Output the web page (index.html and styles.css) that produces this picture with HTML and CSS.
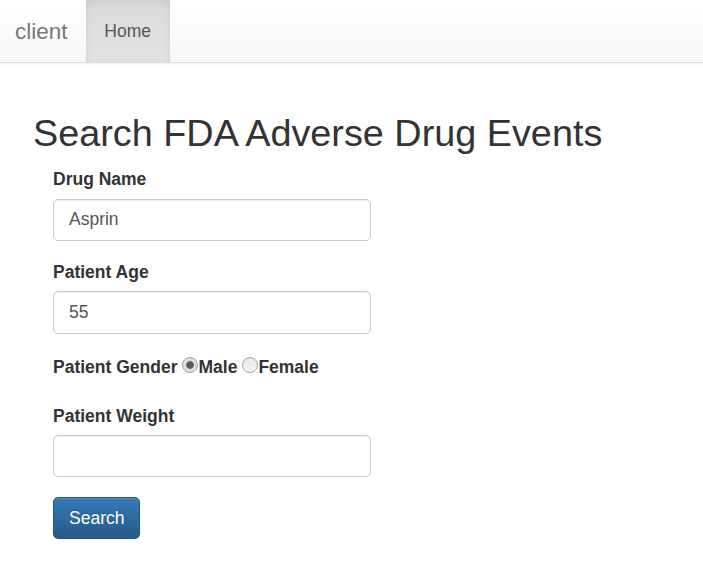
FILE: index.html
```html
<!DOCTYPE html>
<html lang="en">
<head>
<meta charset="utf-8">
<title>client</title>
<link rel="stylesheet" href="styles.css">
</head>
<body>
<nav class="navbar">
  <a class="brand" href="#">client</a>
  <ul class="nav">
    <li class="nav-item active"><a href="#">Home</a></li>
  </ul>
</nav>
<main class="container">
  <h2 class="title">Search FDA Adverse Drug Events</h2>
  <form class="search-form">
    <div class="form-group">
      <label class="field-label" for="drug">Drug Name</label>
      <input class="form-control" id="drug" type="text" value="Asprin">
    </div>
    <div class="form-group">
      <label class="field-label" for="age">Patient Age</label>
      <input class="form-control" id="age" type="text" value="55">
    </div>
    <div class="form-group gender-group">
      <span class="inline-label">Patient Gender</span><input class="radio" type="radio" name="gender" id="male" checked><label class="inline-label" for="male">Male</label><input class="radio" type="radio" name="gender" id="female"><label class="inline-label" for="female">Female</label>
    </div>
    <div class="form-group">
      <label class="field-label" for="weight">Patient Weight</label>
      <input class="form-control" id="weight" type="text" value="">
    </div>
    <button class="btn-primary" type="button">Search</button>
  </form>
</main>
</body>
</html>
```

FILE: styles.css
```css
html, body {
  margin: 0;
  padding: 0;
  background: #fff;
}
body {
  font-family: "Liberation Sans", Arial, Helvetica, sans-serif;
  font-size: 17.5px;
  line-height: 25px;
  color: #333;
}
.navbar {
  display: flex;
  height: 62px;
  background: linear-gradient(to bottom, #ffffff 0%, #f8f8f8 100%);
  border-bottom: 1px solid #dedede;
  box-shadow: 0 1px 6px rgba(0, 0, 0, 0.07);
}
.brand {
  display: block;
  padding: 18.5px 18px 18.5px 15px;
  font-size: 22.5px;
  line-height: 25px;
  color: #777;
  text-decoration: none;
}
.nav {
  list-style: none;
  margin: 0;
  padding: 0;
  display: flex;
}
.nav-item a {
  display: block;
  padding: 18.5px 18.75px;
  line-height: 25px;
  color: #555;
  text-decoration: none;
}
.nav-item.active a {
  background: linear-gradient(to bottom, #dbdbdb 0%, #e2e2e2 100%);
  box-shadow: inset 0 3px 9px rgba(0, 0, 0, 0.075);
}
.container {
  padding: 49.5px 0 0 33px;
}
.title {
  margin: 0 0 12.5px;
  font-size: 37.8px;
  line-height: 41.25px;
  font-weight: 500;
  color: #333;
}
.search-form {
  margin: 0 0 0 20px;
  padding-top: 1px;
}
.form-group {
  margin-bottom: 18.75px;
}
.field-label {
  display: block;
  font-weight: bold;
  margin-bottom: 6.25px;
}
.form-control {
  display: block;
  box-sizing: border-box;
  width: 317.5px;
  height: 42.5px;
  padding: 7.5px 15px;
  margin: 0;
  font-family: inherit;
  font-size: 17.5px;
  line-height: 25px;
  color: #555;
  background: #fff;
  border: 1px solid #ccc;
  border-radius: 5px;
  box-shadow: inset 0 1px 1px rgba(0, 0, 0, 0.075);
  outline: none;
}
.gender-group {
  padding-top: 2.5px;
  padding-bottom: 5px;
}
.inline-label {
  font-weight: bold;
}
.radio {
  -webkit-appearance: none;
  appearance: none;
  display: inline-block;
  box-sizing: border-box;
  width: 16px;
  height: 16px;
  margin: 0 0.5px 0 4.5px;
  padding: 0;
  border: 1px solid #a6a6a6;
  border-radius: 50%;
  background: linear-gradient(to bottom, #e6e6e6 0%, #f7f7f7 100%);
  vertical-align: baseline;
  outline: none;
}
.radio:checked {
  background: radial-gradient(circle, #5a5a5a 0, #5a5a5a 3.4px, #d9d9d9 4.2px, #ececec 100%);
  border-color: #9a9a9a;
}
.btn-primary {
  display: inline-block;
  margin: 1px 0 0;
  padding: 7.5px 15px;
  font-family: inherit;
  font-size: 17.5px;
  line-height: 25px;
  color: #fff;
  text-shadow: 0 -1px 0 rgba(0, 0, 0, 0.2);
  background: linear-gradient(to bottom, #337ab7 0%, #265a88 100%);
  border: 1px solid #245580;
  border-radius: 5px;
  box-shadow: inset 0 1px 0 rgba(255, 255, 255, 0.15), 0 1px 1px rgba(0, 0, 0, 0.075);
  cursor: pointer;
}
```
